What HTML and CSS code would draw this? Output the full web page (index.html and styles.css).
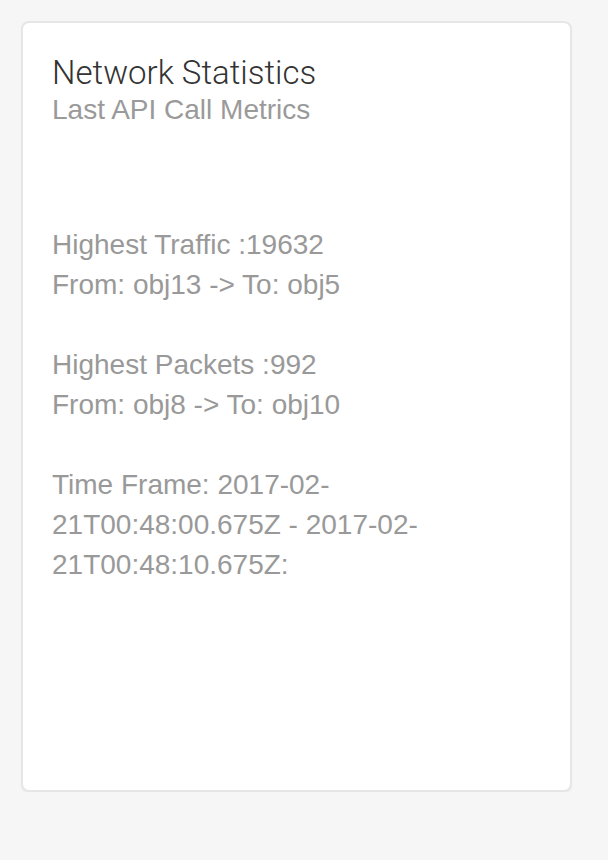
FILE: index.html
```html
<!DOCTYPE html>
<html>
<head>
<meta charset="utf-8">
<link rel="stylesheet" href="styles.css">
</head>
<body>
<div class="page">
  <div class="card">
    <h2 class="card-title">Network Statistics</h2>
    <div class="card-subtitle">Last API Call Metrics</div>
    <div class="stats">
      <p class="stat">Highest Traffic :19632<br>From: obj13 -&gt; To: obj5</p>
      <p class="stat">Highest Packets :992<br>From: obj8 -&gt; To: obj10</p>
      <p class="stat">Time Frame: 2017-02-<wbr>21T00:48:00.675Z - 2017-02-<wbr>21T00:48:10.675Z:</p>
    </div>
  </div>
</div>
</body>
</html>
```

FILE: styles.css
```css
html, body {
  margin: 0;
  padding: 0;
  background: #f6f6f6;
}
.page {
  padding: 21px 0 0 21px;
}
.card {
  box-sizing: border-box;
  width: 551px;
  height: 771px;
  background: #fff;
  border: 2px solid #e6e6e6;
  border-radius: 8px;
  box-shadow: 0 2px 2px rgba(0, 0, 0, 0.04);
  padding: 33px 29px 0 29px;
  font-family: "Liberation Sans", Arial, sans-serif;
}
.card-title {
  margin: 0;
  font-family: Roboto, "Liberation Sans", sans-serif;
  font-size: 33px;
  line-height: 34px;
  font-weight: 300;
  color: #333;
}
.card-subtitle {
  font-size: 28px;
  line-height: 40px;
  color: #9a9a9a;
}
.stats {
  margin-top: 95px;
}
.stat {
  margin: 0 0 40px 0;
  font-size: 28px;
  line-height: 40px;
  color: #999;
}
```
